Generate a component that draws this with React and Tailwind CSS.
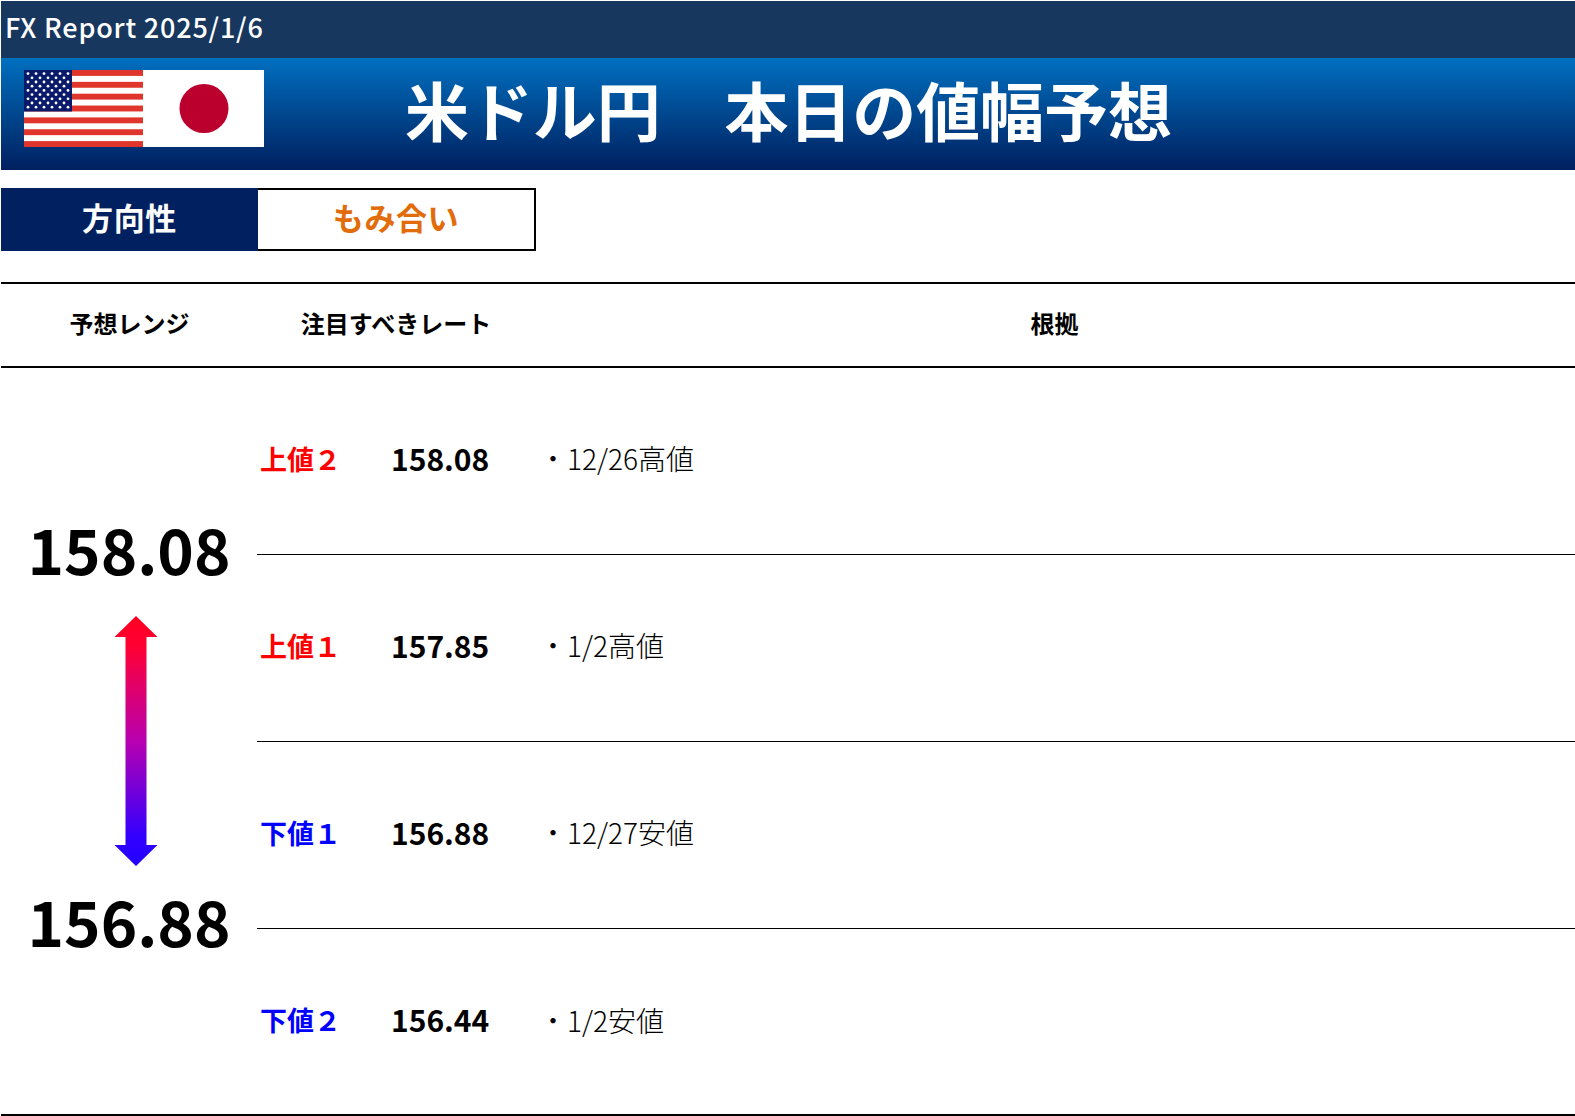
const jp = "font-['Noto_Sans_CJK_JP','Noto_Sans_JP',sans-serif]";

const rows = [
  { label: '上値２', rate: '158.08', note: '・12/26高値', color: 'text-[#ff0000]' },
  { label: '上値１', rate: '157.85', note: '・1/2高値', color: 'text-[#ff0000]' },
  { label: '下値１', rate: '156.88', note: '・12/27安値', color: 'text-[#0000ff]' },
  { label: '下値２', rate: '156.44', note: '・1/2安値', color: 'text-[#0000ff]' },
];

function Flags() {
  const stars = [];
  for (let r = 0; r < 9; r++) {
    const n = r % 2 === 0 ? 6 : 5;
    for (let c = 0; c < n; c++) {
      stars.push(
        <circle
          key={`${r}-${c}`}
          cx={(r % 2 === 0 ? 4 : 8) + c * 8}
          cy={3.6 + r * 4.2}
          r="1.4"
          fill="#ffffff"
        />
      );
    }
  }
  return (
    <svg width="240" height="77" viewBox="0 0 240 77" className="block shrink-0">
      <rect width="240" height="77" fill="#ffffff" />
      {[0, 1, 2, 3, 4, 5, 6].map((i) => (
        <rect key={i} x="0" y={i * 11.85} width="119" height="5.9" fill="#e0352b" />
      ))}
      <rect width="48" height="41.5" fill="#0a1a6b" />
      {stars}
      <circle cx="180" cy="38.5" r="24.5" fill="#bc002d" />
    </svg>
  );
}

function RangeArrow() {
  return (
    <svg width="44" height="250" viewBox="0 0 44 250" className="block">
      <defs>
        <linearGradient id="rangeFill" x1="0" y1="0" x2="0" y2="1">
          <stop offset="0" stopColor="#ff0022" />
          <stop offset="0.12" stopColor="#ff0033" />
          <stop offset="0.5" stopColor="#b800b0" />
          <stop offset="0.88" stopColor="#3300ff" />
          <stop offset="1" stopColor="#2200ff" />
        </linearGradient>
      </defs>
      <path
        d="M22 0 L43.5 21 L32.5 21 L32.5 229 L43.5 229 L22 250 L0.5 229 L11.5 229 L11.5 21 L0.5 21 Z"
        fill="url(#rangeFill)"
      />
    </svg>
  );
}

export default function App() {
  return (
    <div className={`${jp} min-h-[1116px] w-[1575px] overflow-hidden bg-white pl-px pt-px text-black`}>
      <div className="flex h-[57px] items-center bg-[#17375e] pb-[6px] pl-[4px] text-[27px] font-medium leading-none tracking-[0.8px] text-white">
        FX Report 2025/1/6
      </div>

      <div className="flex h-[112px] items-center bg-gradient-to-b from-[#0070c0] to-[#002060] pl-[23px]">
        <div className="mb-[12px]">
          <Flags />
        </div>
        <h1 className="mb-[12px] ml-[141px] whitespace-pre text-[64px] font-bold leading-none tracking-[-0.1px] text-white">
          米ドル円　本日の値幅予想
        </h1>
      </div>

      <div className="mt-[18px] flex h-[63px] w-[535px] text-[31px] font-bold tracking-[0.6px]">
        <div className="flex w-[257px] items-center justify-center bg-[#002060] pb-[4px] text-white">
          方向性
        </div>
        <div className="flex flex-1 items-center justify-center border-2 border-l-0 border-black pb-[4px] text-[#e26b0a]">
          もみ合い
        </div>
      </div>

      <div className="mt-[31px] flex h-[86px] items-center border-y-2 border-black pb-[4px] text-[24px] font-bold">
        <div className="w-[257px] text-center">予想レンジ</div>
        <div className="w-[276px] text-center">注目すべきレート</div>
        <div className="flex-1 text-center">根拠</div>
      </div>

      <div className="flex border-b-2 border-black">
        <div className="flex w-[256px] shrink-0 flex-col items-center pt-[140px]">
          <div className="text-[62px] font-bold leading-[80px]">158.08</div>
          <div className="ml-[14px] mt-[28px]">
            <RangeArrow />
          </div>
          <div className="mt-[14px] text-[62px] font-bold leading-[80px]">156.88</div>
        </div>
        <div className="flex-1">
          {rows.map((row, i) => (
            <div
              key={row.label}
              className={`flex items-center pl-[3px] ${i < 3 ? 'h-[187px] border-b border-black pb-[6px]' : 'h-[185px] pb-[4px]'}`}
            >
              <div className={`mt-[2px] w-[131px] text-[27px] font-bold ${row.color}`}>{row.label}</div>
              <div className="w-[148px] text-[30px] font-bold">{row.rate}</div>
              <div className="text-[28px] font-light">{row.note}</div>
            </div>
          ))}
        </div>
      </div>
    </div>
  );
}
